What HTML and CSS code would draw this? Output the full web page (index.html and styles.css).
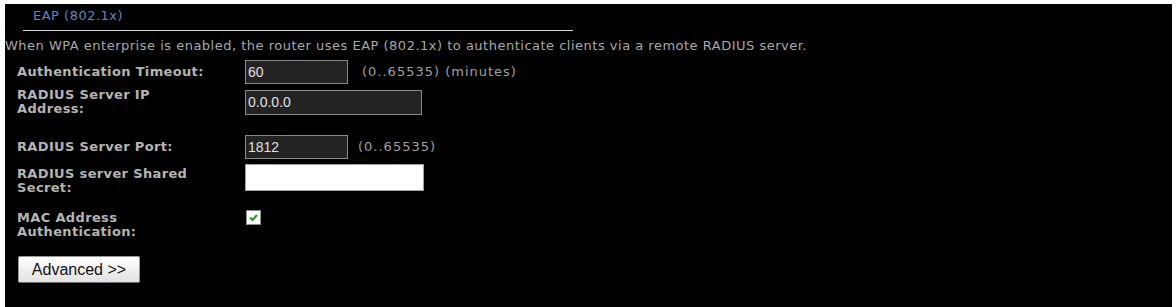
FILE: index.html
```html
<!DOCTYPE html>
<html>
<head>
<meta charset="utf-8">
<link rel="stylesheet" href="styles.css">
</head>
<body>
<div class="panel">
  <div class="title">EAP (802.1x)</div>
  <div class="desc">When WPA enterprise is enabled, the router uses EAP (802.1x) to authenticate clients via a remote RADIUS server.</div>
  <div class="form">
    <div class="row r1">
      <div class="label">Authentication Timeout:</div>
      <div class="field short">60</div>
      <div class="hint">(0..65535) (minutes)</div>
    </div>
    <div class="row r2">
      <div class="label">RADIUS Server IP Address:</div>
      <div class="field long">0.0.0.0</div>
    </div>
    <div class="row r3">
      <div class="label">RADIUS Server Port:</div>
      <div class="field short">1812</div>
      <div class="hint near">(0..65535)</div>
    </div>
    <div class="row r4 top">
      <div class="label drop3">RADIUS server Shared Secret:</div>
      <div class="field secret"></div>
    </div>
    <div class="row r5 top">
      <div class="label drop1">MAC Address Authentication:</div>
      <div class="check"><svg width="11" height="11" viewBox="0 0 11 11"><path d="M2 5.5 L4.5 8 L9 3" fill="none" stroke="#2f9a3a" stroke-width="2.2"/></svg></div>
    </div>
    <div class="btnrow">
      <button class="btn">Advanced &gt;&gt;</button>
    </div>
  </div>
</div>
</body>
</html>
```
FILE: styles.css
```css
html, body {
  margin: 0;
  background: #fff;
}
.panel {
  margin: 4px 4px 0 5px;
  background: #000;
  height: 303px;
  overflow: hidden;
  font-family: "DejaVu Sans", Verdana, sans-serif;
}
.title {
  margin-left: 18px;
  width: 540px;
  padding: 5px 0 7px 10px;
  border-bottom: 1px solid #d8d8d8;
  color: #5c88c4;
  font-size: 13px;
  line-height: 14px;
  letter-spacing: 0.5px;
}
.desc {
  margin-top: 8px;
  color: #a8a8a8;
  font-size: 13px;
  line-height: 14px;
  letter-spacing: 0.5px;
  white-space: nowrap;
}
.form {
  padding-left: 12px;
}
.row {
  display: flex;
  align-items: center;
}
.row.top {
  align-items: flex-start;
}
.r1 { margin-top: 7px; }
.r2 { margin-top: 4px; }
.r3 { margin-top: 19px; }
.r4 { margin-top: 5px; }
.r5 { margin-top: 15px; }
.label {
  width: 196px;
  margin-right: 32px;
  color: #b4b4b4;
  font-weight: bold;
  font-size: 13px;
  line-height: 14px;
  letter-spacing: 0.35px;
}
.label.drop3 { margin-top: 3px; }
.label.drop1 { margin-top: 1px; }
.field {
  box-sizing: border-box;
  height: 24px;
  background: #232323;
  border: 1px solid #8a8a8a;
  color: #e0e0e0;
  font: 14px/22px "Liberation Sans", Arial, sans-serif;
  padding: 0 2px;
}
.field.short { width: 103px; height: 24px; }
.field.long { width: 177px; height: 25px; }
.field.secret {
  width: 179px;
  height: 27px;
  background: #fff;
  border-color: #a0a0a0;
}
.hint {
  margin-left: 14px;
  color: #a0a0a0;
  font-size: 13px;
  line-height: 14px;
  letter-spacing: 1px;
}
.hint.near {
  margin-left: 10px;
}
.check {
  box-sizing: border-box;
  width: 15px;
  height: 15px;
  margin-left: 1px;
  background: #fff;
  border: 1px solid #8c8c8c;
  display: flex;
  align-items: center;
  justify-content: center;
}
.btnrow {
  margin-top: 17px;
  padding-left: 1px;
}
.btn {
  box-sizing: border-box;
  width: 122px;
  height: 27px;
  border: 1px solid #9a9a9a;
  border-bottom-color: #6f6f6f;
  border-radius: 2px;
  background: linear-gradient(#ffffff, #e2e2e2);
  color: #111;
  font: 16px "Liberation Sans", Arial, sans-serif;
  padding: 0;
}
```
